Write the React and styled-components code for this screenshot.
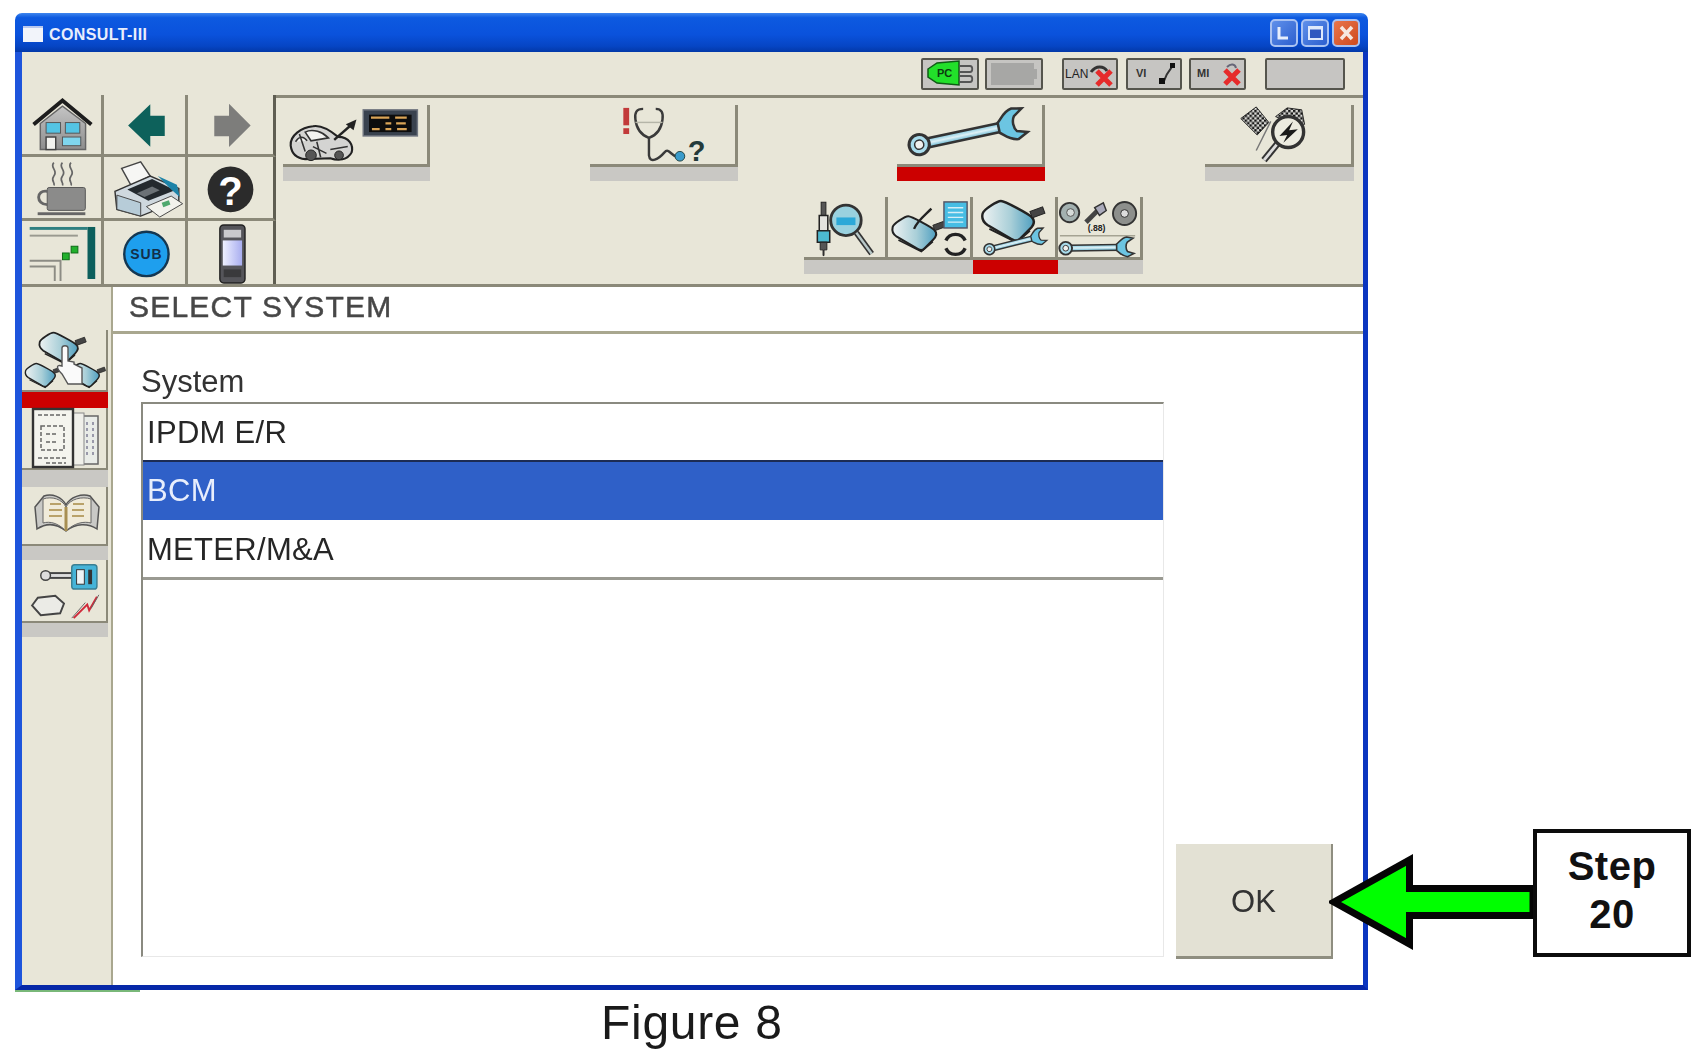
import React from 'react';
import styled, { createGlobalStyle } from 'styled-components';

const beige = '#e8e6d8';
const rule = '#8b8979';
const barGrey = '#c9c8c4';
const barRed = '#cc0000';

const GlobalStyle = createGlobalStyle`
  html, body { margin: 0; padding: 0; background: #fff; }
  body { font-family: "Liberation Sans", Arial, sans-serif; }
`;

const Page = styled.div`
  position: relative;
  width: 1705px;
  height: 1063px;
  overflow: hidden;
  padding: 13px 0 0 15px;
  box-sizing: border-box;
  filter: blur(0.6px);
`;

const Window = styled.div`
  display: flex;
  flex-direction: column;
  width: 1353px;
  height: 977px;
`;

const TitleBar = styled.div`
  display: flex;
  align-items: center;
  height: 39px;
  flex: none;
  padding: 0 8px 0 8px;
  border-radius: 7px 7px 0 0;
  background: linear-gradient(#3f86ee 0, #0d5ae0 12%, #0a52dc 55%, #0645c4 85%, #0338a8 100%);
  color: #fff;
`;

const TitleIcon = styled.span`
  width: 20px;
  height: 14px;
  margin: 3px 6px 0 0;
  background: #f2f4fa;
  border-top: 2px solid #b9c8ee;
`;

const TitleText = styled.span`
  flex: 1;
  padding-top: 4px;
  font-size: 16px;
  font-weight: 700;
  letter-spacing: 0.4px;
  color: #e9eefc;
`;

const WinButton = styled.button`
  display: flex;
  align-items: center;
  justify-content: center;
  width: 28px;
  height: 28px;
  padding: 0;
  margin-left: 3px;
  border: 2px solid #a9c2f2;
  border-radius: 5px;
  background: ${p => (p.$close ? 'linear-gradient(135deg,#e8754c,#cf4a1e)' : 'linear-gradient(135deg,#5f90ea,#2d5fcf)')};
`;

const Frame = styled.div`
  display: flex;
  flex-direction: column;
  flex: 1;
  min-height: 0;
  border-style: solid;
  border-width: 0 5px 5px 7px;
  border-color: #0b36c0 #0b36c0 #0628a8 #1e55dc;
  background: ${beige};
`;

const GreenEdge = styled.div`
  width: 125px;
  height: 2px;
  background: #79b879;
`;

const StatusBar = styled.div`
  display: flex;
  justify-content: flex-end;
  align-items: flex-start;
  height: 43px;
  flex: none;
  padding: 6px 18px 0 0;
  box-sizing: border-box;
`;

const StatusBox = styled.div`
  width: ${p => p.$w}px;
  height: 32px;
  margin-left: ${p => p.$ml}px;
  box-sizing: border-box;
  border: 2px solid #55554d;
  border-radius: 2px;
  background: #c6c5c2;
`;

const TopRow = styled.div`
  display: flex;
  height: 192px;
  flex: none;
  box-sizing: border-box;
  border-bottom: 3px solid ${rule};
`;

const NavGrid = styled.div`
  display: grid;
  grid-template-columns: 82px 84px 88px;
  grid-template-rows: 62px 64px 63px;
  flex: none;
`;

const NavCell = styled.div`
  box-sizing: border-box;
  border-right: 3px solid ${p => (p.$last ? '#5f5e52' : rule)};
  border-bottom: ${p => (p.$bottom ? 0 : `3px solid ${rule}`)};
`;

const TabsArea = styled.div`
  flex: 1;
  border-top: 3px solid ${rule};
  padding: 7px 9px 0 7px;
`;

const MainTabs = styled.div`
  display: flex;
  justify-content: space-between;
`;

const SubTabs = styled.div`
  display: flex;
  margin: 16px 0 0 521px;
`;

const TabWrap = styled.div`
  display: flex;
  flex-direction: column;
  width: ${p => p.$w}px;
`;

const TabFace = styled.div`
  height: ${p => p.$h}px;
  box-sizing: border-box;
  border-right: 3px solid ${rule};
  border-bottom: 3px solid ${rule};
`;

const TabBar = styled.div`
  height: ${p => p.$h}px;
  background: ${p => (p.$active ? barRed : barGrey)};
`;

const Main = styled.div`
  display: flex;
  flex: 1;
  min-height: 0;
`;

const Sidebar = styled.div`
  width: 91px;
  flex: none;
  box-sizing: border-box;
  padding: 43px 3px 0 0;
  border-right: 2px solid #a9a78f;
`;

const SideFace = styled.div`
  height: ${p => p.$h}px;
  box-sizing: border-box;
  border-right: 2px solid ${rule};
  border-bottom: 2px solid ${rule};
`;

const Content = styled.div`
  display: flex;
  flex-direction: column;
  flex: 1;
  min-width: 0;
  background: #fff;
`;

const Heading = styled.div`
  height: 47px;
  flex: none;
  box-sizing: border-box;
  padding-left: 16px;
  border-bottom: 3px solid #a9a78f;
  font-size: 30px;
  line-height: 40px;
  letter-spacing: 1.2px;
  color: #474747;
  -webkit-text-stroke: 0.5px #474747;
`;

const ContentRow = styled.div`
  display: flex;
  flex: 1;
  min-height: 0;
  padding: 29px 30px 28px 28px;
`;

const ListColumn = styled.div`
  display: flex;
  flex-direction: column;
  flex: 1;
  min-width: 0;
`;

const ListLabel = styled.div`
  height: 39px;
  flex: none;
  font-size: 31px;
  line-height: 38px;
  color: #333;
`;

const List = styled.div`
  flex: 1;
  border-top: 2px solid #8a8a80;
  border-left: 2px solid #8a8a80;
  border-right: 1px solid #e8e8e8;
  border-bottom: 1px solid #e8e8e8;
`;

const Row = styled.div`
  height: ${p => p.$h}px;
  box-sizing: border-box;
  padding-left: 4px;
  font-size: 31px;
  letter-spacing: 0.3px;
  line-height: ${p => p.$lh}px;
  color: ${p => (p.$selected ? '#e8eefc' : '#262626')};
  background: ${p => (p.$selected ? '#2f60c8' : '#fff')};
  border-top: ${p => (p.$selected ? '2px solid #1c2c55' : '0')};
  border-bottom: ${p => (p.$underline ? '3px solid #9a9a92' : '0')};
`;

const OkButton = styled.button`
  align-self: flex-end;
  width: 157px;
  height: 115px;
  margin: 0 0 -2px 12px;
  padding: 4px 0 0;
  border: 0;
  border-right: 2px solid #8f8e80;
  border-bottom: 3px solid #8f8e80;
  background: #e3e1d4;
  font-family: inherit;
  font-size: 31px;
  color: #333;
`;

const Caption = styled.div`
  margin: 3px 0 0 586px;
  font-size: 48px;
  line-height: 56px;
  letter-spacing: 0.7px;
  color: #1a1a1a;
`;

const Callout = styled.div`
  position: absolute;
  left: 1329px;
  top: 829px;
  display: flex;
  align-items: flex-start;
`;

const StepBox = styled.div`
  width: 158px;
  height: 128px;
  box-sizing: border-box;
  border: 4px solid #0c0c0c;
  background: #fff;
  text-align: center;
  font-size: 40px;
  font-weight: 700;
  line-height: 48px;
  letter-spacing: 0.5px;
  padding-top: 9px;
  color: #111;
`;

const ArrowSvg = styled.svg`
  display: block;
  flex: none;
  width: 204px;
  height: 99px;
  margin-top: 24px;
`;

const Drawing = styled.svg`
  display: block;
  width: 100%;
  height: 100%;
  overflow: visible;
`;

const DefsHolder = styled.svg`
  display: block;
  width: 0;
  height: 0;
`;

// drawing helpers, all coordinates are relative to the button the icon sits in
const Wrench = ({ x, y, angle, scale = 1 }) => (
  <g transform={`translate(${x} ${y}) rotate(${angle}) scale(${scale})`} stroke="#333">
    <rect x="7" y="-4.5" width="76" height="9" fill="url(#ice)" strokeWidth="2.5" />
    <circle r="10" fill="#a9dcec" strokeWidth="3" />
    <circle r="4.5" fill="#f0f0ee" strokeWidth="1.5" />
    <path d="M80 -5 C84 -8 88 -15 96 -16 L106 -14 L97 -8 C94 -4 94 3 97 7 L107 10 L97 15 C88 14 84 8 80 5 Z" fill="#6cc5e2" strokeWidth="2.5" />
  </g>
);

const Ecu = ({ x, y, scale = 1 }) => (
  <g transform={`translate(${x} ${y}) scale(${scale})`} stroke="#222">
    <path d="M1 14 C2 10 16 1 20 1 C24 1 50 15 52 18 C56 22 54 26 50 30 L40 40 C36 44 34 42 30 40 L6 26 C0 22 0 18 1 14 Z" fill="url(#ecu)" strokeWidth="2.5" />
    <path d="M8 30 L36 44 L50 32" fill="none" strokeWidth="2" />
    <rect x="50" y="12" width="14" height="7" transform="rotate(-20 50 12)" fill="#444" strokeWidth="1" />
  </g>
);

const HomeIcon = () => (
  <Drawing viewBox="0 0 82 60">
    <path d="M19 29 L42 11 L66 29 V56 H19 Z" fill="url(#steel)" stroke="#666" strokeWidth="1.5" />
    <path d="M12 30 L42 5 L72 30" fill="none" stroke="#1d1d1d" strokeWidth="4" />
    <rect x="25" y="28" width="15" height="11" fill="#54c4e4" stroke="#555" />
    <rect x="45" y="28" width="15" height="11" fill="#54c4e4" stroke="#555" />
    <rect x="25" y="43" width="10" height="13" fill="#f2f2ee" stroke="#444" strokeWidth="1.5" />
    <rect x="42" y="43" width="19" height="9" fill="#7fd6ee" stroke="#555" />
  </Drawing>
);

const BackIcon = () => (
  <Drawing viewBox="0 0 84 60">
    <polygon points="25,31 48,9 48,21 63,21 63,42 48,42 48,53" fill="#0d615b" />
  </Drawing>
);

const ForwardIcon = () => (
  <Drawing viewBox="0 0 85 60">
    <polygon points="63,31 41,9 41,21 26,21 26,42 41,42 41,53" fill="#7d7d7b" />
  </Drawing>
);

const CoffeeIcon = () => (
  <Drawing viewBox="0 0 82 64">
    <path d="M33 6 C28 11 38 14 33 20 C29 25 35 27 33 30 M42 6 C37 11 47 14 42 20 C38 25 44 27 42 30 M51 6 C46 11 56 14 51 20 C47 25 53 27 51 30" fill="none" stroke="#666" strokeWidth="1.8" />
    <rect x="26" y="32" width="40" height="24" rx="2" fill="#8b8b8a" stroke="#555" />
    <path d="M26 36 C14 34 14 50 26 50" fill="none" stroke="#666" strokeWidth="3" />
    <rect x="16" y="58" width="50" height="3" fill="#666" />
  </Drawing>
);

const PrinterIcon = () => (
  <Drawing viewBox="0 0 84 64">
    <polygon points="18,12 38,5 48,20 28,30" fill="#f6f6f4" stroke="#444" strokeWidth="1.5" />
    <path d="M11 36 L48 20 L78 33 L78 46 L38 62 L13 55 Z" fill="#cfd8de" stroke="#333" strokeWidth="1.5" />
    <path d="M24 34 L50 23 L74 35 L46 46 Z" fill="#23292e" />
    <path d="M56 20 L76 29 L79 42 L70 34 Z" fill="#1d83a8" />
    <path d="M34 38 L50 31 L58 35 L42 42 Z" fill="#6b7176" />
    <path d="M13 40 L38 48 L38 62 L13 55 Z" fill="#b7ccd8" stroke="#444" />
    <path d="M44 52 L70 41 L82 49 L58 63 Z" fill="#f2f2ec" stroke="#444" />
    <rect x="60" y="48" width="8" height="5" fill="#4fa96e" transform="rotate(-20 60 48)" />
  </Drawing>
);

const HelpIcon = () => (
  <Drawing viewBox="0 0 88 64">
    <circle cx="44" cy="34" r="24" fill="#2b2b2b" />
    <text x="44" y="50" textAnchor="middle" fontSize="42" fontWeight="700" fill="#fff" fontFamily="Liberation Sans">?</text>
  </Drawing>
);

const LayoutIcon = () => (
  <Drawing viewBox="0 0 82 65">
    <rect x="8" y="6" width="60" height="3" fill="#2e7f80" />
    <rect x="8" y="14" width="50" height="2" fill="#9a9a90" />
    <rect x="68" y="6" width="8" height="54" fill="#0c5f5c" />
    <rect x="42" y="33" width="7" height="7" fill="#22b02c" stroke="#0b6a14" />
    <rect x="51" y="26" width="7" height="7" fill="#22b02c" stroke="#0b6a14" />
    <path d="M8 41 H40 V62 M8 47 H34 V62" fill="none" stroke="#8c8c84" strokeWidth="2" />
  </Drawing>
);

const SubIcon = () => (
  <Drawing viewBox="0 0 84 65">
    <circle cx="44" cy="34" r="23" fill="#1e9fee" stroke="#143752" strokeWidth="2.5" />
    <text x="44" y="39" textAnchor="middle" fontSize="14.5" fontWeight="700" letterSpacing="1" fill="#12304a" fontFamily="Liberation Sans">SUB</text>
  </Drawing>
);

const DeviceIcon = () => (
  <Drawing viewBox="0 0 88 65">
    <rect x="33" y="4" width="26" height="60" rx="4" fill="#55555a" stroke="#222" strokeWidth="1.5" />
    <rect x="37" y="9" width="18" height="8" fill="#c9c9cc" />
    <rect x="36" y="20" width="20" height="26" fill="url(#lilac)" />
    <rect x="37" y="50" width="18" height="8" fill="#3a3a3c" />
  </Drawing>
);

const CarIcon = () => (
  <Drawing viewBox="0 0 147 61">
    <path d="M7 42 C6 32 18 23 30 22 C40 20 50 28 56 33 C68 33 72 42 70 49 C66 57 56 58 48 55 L22 56 C12 55 8 50 7 42 Z" fill="#d4d4d2" stroke="#222" strokeWidth="2.2" />
    <path d="M22 28 C30 24 40 28 46 34 L28 37 Z M12 38 C16 32 20 32 24 37 M48 46 L66 43 M30 43 L44 50 M16 30 L22 48 M34 38 L38 54" fill="#f2f2f0" stroke="#333" strokeWidth="1.6" />
    <circle cx="28" cy="52" r="5.5" fill="#555" stroke="#222" />
    <circle cx="57" cy="52" r="4.5" fill="#555" stroke="#222" />
    <path d="M52 36 L68 22" stroke="#222" strokeWidth="2.5" />
    <polygon points="64,20 75,15 72,26" fill="#222" />
    <rect x="82" y="5" width="56" height="27" fill="#39424e" stroke="#707680" strokeWidth="1.5" />
    <rect x="88" y="10" width="44" height="18" fill="#0d0d0d" />
    <path d="M90 13 H109 M115 13 H127 M105 19 H111 M116 19 H126 M91 25 H99 M105 25 H111 M117 25 H127" stroke="#d9a457" strokeWidth="2.4" />
  </Drawing>
);

const StethIcon = () => (
  <Drawing viewBox="0 0 148 61">
    <rect x="33.5" y="3" width="6" height="18" fill="#c23a3a" />
    <rect x="33.5" y="24" width="6" height="6" fill="#c23a3a" />
    <path d="M54 4 C47 4 45 8 46 15 C47 24 52 31 60 34 C68 31 73 24 74 15 C75 8 73 4 67 4" fill="none" stroke="#3a3a3a" strokeWidth="2.5" />
    <path d="M46 18 H74" stroke="#b5b5a8" strokeWidth="1.5" />
    <path d="M60 34 V52 C61 61 70 56 76 49 C80 44 83 52 88 53" fill="none" stroke="#3a3a3a" strokeWidth="2.5" />
    <circle cx="92" cy="53" r="5" fill="#3a9bcb" stroke="#244" />
    <text x="100" y="58" fontSize="30" fontWeight="700" fill="#243a3a" fontFamily="Liberation Sans">?</text>
  </Drawing>
);

const WrenchIcon = () => (
  <Drawing viewBox="0 0 148 61">
    <Wrench x={22} y={41} angle={-12} scale={1.05} />
  </Drawing>
);

const FlagsIcon = () => (
  <Drawing viewBox="0 0 149 61">
    <polygon points="36,14 52,2 65,18 53,31" fill="url(#checker)" stroke="#222" />
    <polygon points="72,12 84,3 99,5 102,20 86,18" fill="url(#checker)" stroke="#222" />
    <path d="M52 47 L67 17" stroke="#777" strokeWidth="1.5" />
    <path d="M74 40 L60 57" stroke="#333" strokeWidth="7" />
    <path d="M74 40 L60 57" stroke="#ddd" strokeWidth="3" />
    <circle cx="85" cy="28" r="16" fill="#ecebe0" stroke="#333" strokeWidth="3.5" />
    <path d="M76 32 L90 17 L86 26 L95 25 L80 39 L84 31 Z" fill="#1a1a1a" />
  </Drawing>
);

const PlugLensIcon = () => (
  <Drawing viewBox="0 0 85 60">
    <rect x="18" y="4" width="5" height="14" fill="#555" stroke="#222" />
    <path d="M16 18 H25 V34 H16 Z" fill="#e4e4df" stroke="#222" strokeWidth="1.6" />
    <path d="M14 34 H27 V46 H14 Z" fill="#4cb8cf" stroke="#222" strokeWidth="1.6" />
    <path d="M17 46 H24 V54 H21 V60 H20 V54 H17 Z" fill="#555" stroke="#222" />
    <circle cx="44" cy="23" r="16" fill="#7fc9e2" fillOpacity="0.75" stroke="#333" strokeWidth="3" />
    <rect x="34" y="20" width="20" height="8" fill="#2ba8d8" />
    <path d="M55 36 L71 58" stroke="#333" strokeWidth="6" />
    <path d="M55 36 L71 58" stroke="#b8c8c8" strokeWidth="2.5" />
  </Drawing>
);

const EcuFlashIcon = () => (
  <Drawing viewBox="0 0 85 60">
    <Ecu x={4} y={18} scale={0.85} />
    <path d="M27 32 C30 24 38 18 45 11" fill="none" stroke="#222" strokeWidth="2.4" />
    <rect x="58" y="4" width="24" height="27" fill="#47bde4" stroke="#556" strokeWidth="1.5" />
    <path d="M62 10 H78 M62 15 H78 M62 20 H78 M62 25 H78" stroke="#d6eef6" strokeWidth="1.4" />
    <path d="M60 44 A11 11 0 0 1 80 44 M80 52 A11 11 0 0 1 60 52" fill="none" stroke="#222" strokeWidth="3.5" />
  </Drawing>
);

const EcuWrenchIcon = () => (
  <Drawing viewBox="0 0 85 60">
    <Ecu x={9} y={2} />
    <Wrench x={17} y={53} angle={-14} scale={0.56} />
  </Drawing>
);

const PartsIcon = () => (
  <Drawing viewBox="0 0 85 60">
    <circle cx="12" cy="15" r="10" fill="#a3b1b0" stroke="#333" strokeWidth="2" />
    <circle cx="13" cy="15" r="4" fill="#d6dcda" stroke="#555" />
    <path d="M29 25 L41 13" stroke="#444" strokeWidth="5" />
    <path d="M38 10 L47 5 L50 13 L43 18 Z" fill="#aab" stroke="#333" strokeWidth="1.5" />
    <circle cx="69" cy="16" r="12" fill="#8d8f8c" stroke="#333" strokeWidth="2" />
    <circle cx="69" cy="16" r="4" fill="#ddd" stroke="#333" />
    <text x="40" y="34" textAnchor="middle" fontSize="9" fontWeight="700" fill="#222" fontFamily="Liberation Sans">(.88)</text>
    <path d="M2 39 H80" stroke="#a5a393" strokeWidth="1.5" />
    <Wrench x={8} y={52} angle={-1} scale={0.66} />
  </Drawing>
);

const SideEcuIcon = () => (
  <Drawing viewBox="0 0 84 60">
    <Ecu x={17} y={2} scale={0.72} />
    <Ecu x={3} y={33} scale={0.56} />
    <Ecu x={47} y={33} scale={0.56} />
    <path d="M40 18 V36 C34 34 34 38 40 44 L46 54 H60 V38 L52 34 V32 L46 31 V18 C46 15 40 15 40 18 Z" fill="#fafafa" stroke="#555" strokeWidth="1.4" />
  </Drawing>
);

const SideDocIcon = () => (
  <Drawing viewBox="0 0 84 60">
    <rect x="58" y="8" width="18" height="48" fill="#e9ece8" stroke="#666" strokeWidth="1.5" />
    <rect x="46" y="5" width="16" height="52" fill="#f0f0ea" stroke="#888" />
    <rect x="11" y="1" width="40" height="58" fill="#f4f4ee" stroke="#333" strokeWidth="2.4" />
    <path d="M16 7 H46 M19 18 H42 V42 H19 Z M24 26 H36 M24 34 H36 M16 50 H46 M24 55 H44" fill="none" stroke="#666" strokeWidth="1.5" strokeDasharray="4 2" />
    <path d="M65 14 V50 M71 14 V50" stroke="#99a" strokeWidth="2" strokeDasharray="3 3" />
  </Drawing>
);

const SideBookIcon = () => (
  <Drawing viewBox="0 0 84 57">
    <path d="M44 44 C34 36 24 36 15 42 L13 20 L22 9 C30 6 40 10 44 18 C48 10 60 6 68 9 L77 20 L75 42 C66 36 54 36 44 44 Z" fill="#c9c9c6" stroke="#555" strokeWidth="1.5" />
    <path d="M44 44 C36 36 28 34 21 36 L21 12 C30 9 40 12 44 20 C48 12 60 9 69 12 L69 36 C62 34 52 36 44 44 Z" fill="#f0ebda" stroke="#666" />
    <path d="M28 17 H39 M27 23 H40 M27 29 H40 M51 17 H62 M50 23 H62 M50 29 H62" stroke="#b9a26a" strokeWidth="2" />
    <path d="M44 20 V44" stroke="#a88f52" strokeWidth="3" />
  </Drawing>
);

const SideKeyIcon = () => (
  <Drawing viewBox="0 0 84 63">
    <path d="M24 16 H52" stroke="#444" strokeWidth="7" />
    <path d="M24 16 H52" stroke="#ddd" strokeWidth="3" />
    <circle cx="23" cy="16" r="5" fill="#ddd" stroke="#444" strokeWidth="1.5" />
    <rect x="50" y="5" width="26" height="25" rx="3" fill="#46b4d8" stroke="#3b7f92" strokeWidth="1.5" />
    <rect x="55" y="10" width="8" height="15" fill="#eef4f6" stroke="#333" />
    <rect x="67" y="10" width="4" height="15" fill="#333" />
    <path d="M9 47 L15 39 L33 37 L42 45 L38 55 L18 57 Z" fill="#ebebe6" stroke="#444" strokeWidth="2" />
    <path d="M52 60 L66 46 L68 52 L76 38" fill="none" stroke="#d02a3a" strokeWidth="2" />
    <path d="M50 60 L64 44 M70 50 L78 36" fill="none" stroke="#666" strokeWidth="1" />
  </Drawing>
);

const RedCross = ({ x, y, s = 7 }) => (
  <path d={`M${x - s} ${y - s} L${x + s} ${y + s} M${x + s} ${y - s} L${x - s} ${y + s}`} stroke="#e62b2b" strokeWidth="5" />
);

const PlugStatus = () => (
  <Drawing viewBox="0 0 54 28">
    <polygon points="5,9 14,3 36,1 36,25 14,23 5,17" fill="#22e02a" stroke="#0f5c16" strokeWidth="1.5" />
    <text x="14" y="17" fontSize="11" fontWeight="700" fill="#0c3a10" fontFamily="Liberation Sans">PC</text>
    <path d="M36 6 H47 C50 6 50 12 47 12 H36 M36 16 H47 C50 16 50 22 47 22 H36" fill="none" stroke="#555" strokeWidth="1.8" />
  </Drawing>
);

const BatteryStatus = () => (
  <Drawing viewBox="0 0 54 28">
    <path d="M4 3 H47 V9 H50 V19 H47 V25 H4 Z" fill="#a7a7a5" />
  </Drawing>
);

const LanStatus = () => (
  <Drawing viewBox="0 0 52 28">
    <text x="1" y="18" fontSize="12" fontWeight="400" fill="#222" fontFamily="Liberation Sans">LAN</text>
    <path d="M27 12 C32 5 40 6 43 11" fill="none" stroke="#333" strokeWidth="3" />
    <RedCross x={40} y={18} />
  </Drawing>
);

const ViStatus = () => (
  <Drawing viewBox="0 0 52 28">
    <text x="8" y="17" fontSize="11" fontWeight="700" fill="#333" fontFamily="Liberation Sans">VI</text>
    <path d="M36 21 C38 14 40 12 44 7" fill="none" stroke="#333" strokeWidth="2" />
    <rect x="31" y="18" width="6" height="6" fill="#111" />
    <rect x="42" y="3" width="5" height="5" fill="#111" />
  </Drawing>
);

const MiStatus = () => (
  <Drawing viewBox="0 0 53 28">
    <text x="6" y="17" fontSize="11" fontWeight="700" fill="#333" fontFamily="Liberation Sans">MI</text>
    <path d="M36 7 C40 3 44 4 45 8" fill="none" stroke="#667" strokeWidth="2" />
    <RedCross x={41} y={17} />
  </Drawing>
);

const MinGlyph = () => (
  <svg width="19" height="20" viewBox="0 0 19 20"><path d="M4 4 V15 H13" fill="none" stroke="#e6eefc" strokeWidth="3" /></svg>
);
const MaxGlyph = () => (
  <svg width="19" height="20" viewBox="0 0 19 20"><rect x="3" y="4" width="13" height="12" fill="#2f58c0" stroke="#dfe9fb" strokeWidth="2" /><path d="M3 5 H16" stroke="#dfe9fb" strokeWidth="3" /></svg>
);
const CloseGlyph = () => (
  <svg width="19" height="20" viewBox="0 0 19 20"><path d="M4 4 L15 16 M15 4 L4 16" stroke="#f6e8e0" strokeWidth="3.5" /></svg>
);

const navItems = [HomeIcon, BackIcon, ForwardIcon, CoffeeIcon, PrinterIcon, HelpIcon, LayoutIcon, SubIcon, DeviceIcon];
const mainTabs = [
  { Icon: CarIcon, w: 147 },
  { Icon: StethIcon, w: 148 },
  { Icon: WrenchIcon, w: 148, active: true },
  { Icon: FlagsIcon, w: 149 },
];
const subTabs = [
  { Icon: PlugLensIcon, w: 84 },
  { Icon: EcuFlashIcon, w: 85 },
  { Icon: EcuWrenchIcon, w: 85, active: true },
  { Icon: PartsIcon, w: 85 },
];
const sideItems = [
  { Icon: SideEcuIcon, h: 62, bar: 16, active: true },
  { Icon: SideDocIcon, h: 62, bar: 17 },
  { Icon: SideBookIcon, h: 59, bar: 14 },
  { Icon: SideKeyIcon, h: 63, bar: 14 },
];

const App = () => (
  <Page>
    <GlobalStyle />
    <DefsHolder>
      <defs>
        <linearGradient id="steel" x1="0" y1="0" x2="0" y2="1">
          <stop offset="0" stopColor="#c4c4c4" />
          <stop offset="1" stopColor="#8e8e8e" />
        </linearGradient>
        <linearGradient id="ice" x1="0" y1="0" x2="0" y2="1">
          <stop offset="0" stopColor="#7cc6de" />
          <stop offset="0.5" stopColor="#dff1f6" />
          <stop offset="1" stopColor="#5fb3d0" />
        </linearGradient>
        <linearGradient id="ecu" x1="0" y1="0" x2="1" y2="0">
          <stop offset="0" stopColor="#eef2f2" />
          <stop offset="0.55" stopColor="#a9cfd8" />
          <stop offset="1" stopColor="#4f9fc0" />
        </linearGradient>
        <linearGradient id="lilac" x1="0" y1="0" x2="1" y2="0">
          <stop offset="0" stopColor="#eef0ff" />
          <stop offset="1" stopColor="#a9aef0" />
        </linearGradient>
        <pattern id="checker" width="5" height="5" patternUnits="userSpaceOnUse">
          <rect width="5" height="5" fill="#dcdcd8" />
          <rect width="2.5" height="2.5" fill="#141414" />
          <rect x="2.5" y="2.5" width="2.5" height="2.5" fill="#141414" />
        </pattern>
      </defs>
    </DefsHolder>
    <Window>
      <TitleBar>
        <TitleIcon />
        <TitleText>CONSULT-III</TitleText>
        <WinButton><MinGlyph /></WinButton>
        <WinButton><MaxGlyph /></WinButton>
        <WinButton $close><CloseGlyph /></WinButton>
      </TitleBar>
      <Frame>
        <StatusBar>
          <StatusBox $w={58} $ml={0}><PlugStatus /></StatusBox>
          <StatusBox $w={58} $ml={6}><BatteryStatus /></StatusBox>
          <StatusBox $w={56} $ml={19}><LanStatus /></StatusBox>
          <StatusBox $w={56} $ml={8}><ViStatus /></StatusBox>
          <StatusBox $w={57} $ml={7}><MiStatus /></StatusBox>
          <StatusBox $w={80} $ml={19} />
        </StatusBar>
        <TopRow>
          <NavGrid>
            {navItems.map((Icon, i) => (
              <NavCell key={i} $last={i % 3 === 2} $bottom={i > 5}>
                <Icon />
              </NavCell>
            ))}
          </NavGrid>
          <TabsArea>
            <MainTabs>
              {mainTabs.map(({ Icon, w, active }, i) => (
                <TabWrap key={i} $w={w}>
                  <TabFace $h={62}><Icon /></TabFace>
                  <TabBar $h={14} $active={active} />
                </TabWrap>
              ))}
            </MainTabs>
            <SubTabs>
              {subTabs.map(({ Icon, w, active }, i) => (
                <TabWrap key={i} $w={w}>
                  <TabFace $h={63}><Icon /></TabFace>
                  <TabBar $h={14} $active={active} />
                </TabWrap>
              ))}
            </SubTabs>
          </TabsArea>
        </TopRow>
        <Main>
          <Sidebar>
            {sideItems.map(({ Icon, h, bar, active }, i) => (
              <div key={i}>
                <SideFace $h={h}><Icon /></SideFace>
                <TabBar $h={bar} $active={active} />
              </div>
            ))}
          </Sidebar>
          <Content>
            <Heading>SELECT SYSTEM</Heading>
            <ContentRow>
              <ListColumn>
                <ListLabel>System</ListLabel>
                <List>
                  <Row $h={56} $lh={58}>IPDM E/R</Row>
                  <Row $h={60} $lh={58} $selected>BCM</Row>
                  <Row $h={60} $lh={60} $underline>METER/M&amp;A</Row>
                </List>
              </ListColumn>
              <OkButton>OK</OkButton>
            </ContentRow>
          </Content>
        </Main>
      </Frame>
    </Window>
    <GreenEdge />
    <Caption>Figure 8</Caption>
    <Callout>
      <ArrowSvg viewBox="0 0 204 99">
        <polygon points="5,49 80.5,7 80.5,35.5 204,35.5 204,62.5 80.5,62.5 80.5,91" fill="#00ff00" stroke="#050505" strokeWidth="7" />
      </ArrowSvg>
      <StepBox>Step<br />20</StepBox>
    </Callout>
  </Page>
);

export default App;
